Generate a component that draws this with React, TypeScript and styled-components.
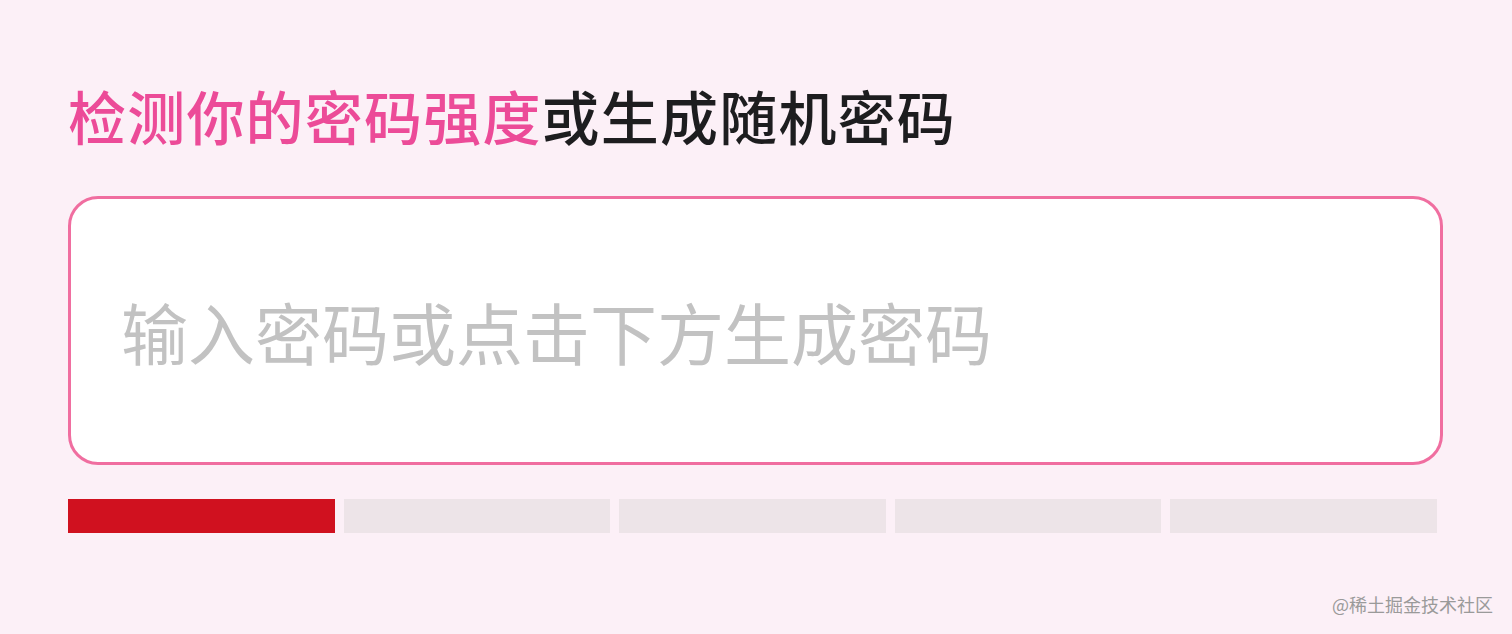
import styled, { createGlobalStyle } from 'styled-components'

const Global = createGlobalStyle`
  html, body {
    margin: 0;
    padding: 0;
    background: #fcf0f7;
  }
  body {
    font-family: 'Noto Sans CJK SC', 'Noto Sans', sans-serif;
  }
`

const Page = styled.div`
  position: relative;
  width: 1512px;
  height: 634px;
  box-sizing: border-box;
  padding: 84px 69px 0 68px;
  background: #fcf0f7;
  overflow: hidden;
`

const Title = styled.h1`
  margin: 0;
  font-size: 58px;
  line-height: 62px;
  font-weight: 500;
  color: #1d1d1f;
  letter-spacing: 1.2px;
`

const Accent = styled.span`
  color: #ec4b98;
`

const InputBox = styled.div`
  margin-top: 50px;
  height: 269px;
  box-sizing: border-box;
  border: 3px solid #f06ea0;
  border-radius: 30px;
  background: #ffffff;
  display: flex;
  align-items: center;
  padding: 0 0 0 50px;
`

const Placeholder = styled.input`
  border: none;
  outline: none;
  background: transparent;
  width: 100%;
  font-family: 'Noto Sans CJK SC', 'Noto Sans', sans-serif;
  font-size: 67px;
  color: #333;
  padding: 0;
  &::placeholder {
    color: #c2c2c2;
  }
`

const Meter = styled.div`
  margin-top: 34px;
  display: grid;
  grid-template-columns: repeat(5, 1fr);
  gap: 9px;
  width: 1369px;
`

const Segment = styled.div<{ $on: boolean }>`
  height: 34px;
  background: ${p => (p.$on ? '#d0111f' : '#ede4e8')};
`

const Watermark = styled.div`
  position: absolute;
  right: 19px;
  bottom: 17px;
  font-size: 18px;
  color: #9a9a9a;
`

export default function App() {
  const level = 1
  return (
    <>
      <Global />
      <Page>
        <Title>
          <Accent>检测你的密码强度</Accent>或生成随机密码
        </Title>
        <InputBox>
          <Placeholder placeholder="输入密码或点击下方生成密码" />
        </InputBox>
        <Meter>
          {[0, 1, 2, 3, 4].map(i => (
            <Segment key={i} $on={i < level} />
          ))}
        </Meter>
        <Watermark>@稀土掘金技术社区</Watermark>
      </Page>
    </>
  )
}
